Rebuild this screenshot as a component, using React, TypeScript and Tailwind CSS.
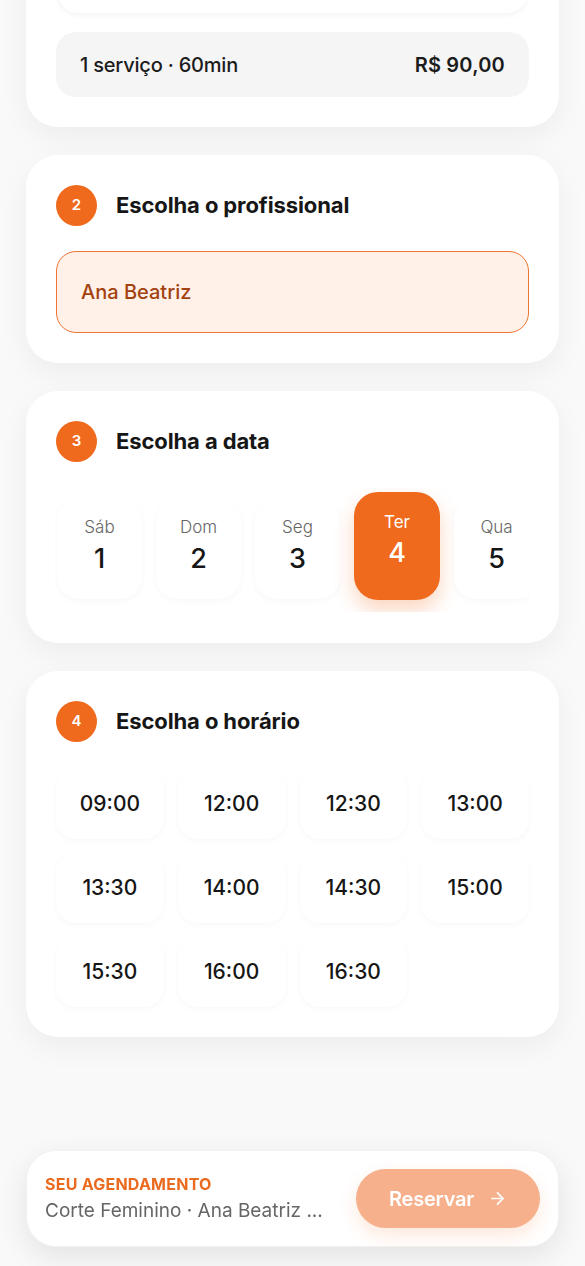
import { ArrowRight } from "lucide-react";

const days = [
  { name: "Sáb", num: 1 },
  { name: "Dom", num: 2 },
  { name: "Seg", num: 3 },
  { name: "Ter", num: 4 },
  { name: "Qua", num: 5 },
];

const times = [
  "09:00", "12:00", "12:30", "13:00",
  "13:30", "14:00", "14:30", "15:00",
  "15:30", "16:00", "16:30",
];

function StepHeader({ n, title }: { n: number; title: string }) {
  return (
    <div className="flex items-center gap-[19px] h-[41px]">
      <span className="w-[41px] h-[41px] rounded-full bg-[#f06a1d] text-white text-[15px] font-semibold flex items-center justify-center">
        {n}
      </span>
      <h2 className="text-[22px] font-bold tracking-[-0.005em] text-[#161616]">{title}</h2>
    </div>
  );
}

export default function App() {
  const selectedDay = 4;

  return (
    <div
      className="min-h-screen bg-[#f9f9f9] px-[26px] pb-[140px] overflow-hidden"
      style={{ fontFamily: "Inter, 'Noto Sans', sans-serif" }}
    >
      <div className="flex flex-col gap-7">
        {/* 1 - serviço (scrolled, top hidden) */}
        <section className="-mt-[87px] bg-white rounded-[32px] p-[30px] shadow-[0_10px_30px_rgba(0,0,0,0.05)]">
          <div className="h-[70px] rounded-[20px] bg-white shadow-[0_2px_6px_rgba(0,0,0,0.05)] mx-[2px]" />
          <div className="mt-[19px] h-[65px] rounded-[20px] bg-[#f5f5f5] px-6 flex items-center justify-between text-[20px] text-[#1c1c1c]">
            <span className="font-medium tracking-[-0.01em]">1 serviço · 60min</span>
            <span className="font-semibold tracking-[0.01em]">R$ 90,00</span>
          </div>
        </section>

        {/* 2 - profissional */}
        <section className="bg-white rounded-[32px] p-[30px] shadow-[0_10px_30px_rgba(0,0,0,0.05)]">
          <StepHeader n={2} title="Escolha o profissional" />
          <button className="mt-[25px] w-full h-[82px] rounded-[20px] border-[1.5px] border-[#ee7330] bg-[#fff0e8] px-[24px] text-left text-[20px] font-medium text-[#a3420f]">
            Ana Beatriz
          </button>
        </section>

        {/* 3 - data */}
        <section className="bg-white rounded-[32px] p-[30px] pb-[31px] shadow-[0_10px_30px_rgba(0,0,0,0.05)]">
          <StepHeader n={3} title="Escolha a data" />
          <div className="mt-[26px] -mx-[1px] px-[2px] pt-[11px] pb-[12px] flex items-start gap-[14px] overflow-hidden">
            {days.map((d) =>
              d.num === selectedDay ? (
                <div
                  key={d.num}
                  className="shrink-0 -mt-[7px] w-[86px] h-[108px] rounded-[24px] bg-[#f06a1d] text-white flex flex-col items-center pt-[18px] shadow-[0_10px_20px_rgba(240,106,29,0.28)]"
                >
                  <span className="text-[17px] leading-[24px]">{d.name}</span>
                  <span className="mt-[3px] text-[27px] leading-[32px] font-medium">{d.num}</span>
                </div>
              ) : (
                <div
                  key={d.num}
                  className="shrink-0 w-[85px] h-[100px] rounded-[22px] bg-white flex flex-col items-center pt-[16px] shadow-[0_2px_6px_rgba(0,0,0,0.035)]"
                >
                  <span className="text-[17px] leading-[24px] font-light text-[#666]">{d.name}</span>
                  <span className="mt-[4px] text-[27px] leading-[32px] font-medium text-[#161616]">{d.num}</span>
                </div>
              )
            )}
          </div>
        </section>

        {/* 4 - horário */}
        <section className="bg-white rounded-[32px] p-[30px] shadow-[0_10px_30px_rgba(0,0,0,0.05)]">
          <StepHeader n={4} title="Escolha o horário" />
          <div className="mt-[27px] grid grid-cols-4 gap-[14px]">
            {times.map((t) => (
              <button
                key={t}
                className="h-[70px] rounded-[20px] bg-white text-[21px] font-medium text-[#161616] shadow-[0_2px_6px_rgba(0,0,0,0.03)]"
              >
                {t}
              </button>
            ))}
          </div>
        </section>
      </div>

      {/* barra fixa */}
      <div className="fixed left-[26px] right-[26px] bottom-[19px] h-[97px] bg-white rounded-[30px] px-[18px] flex items-center gap-[17px] shadow-[0_10px_30px_rgba(0,0,0,0.09)] border border-[#f1f1f1]">
        <div className="flex-1 min-w-0">
          <p className="text-[16px] font-bold text-[#ea6a20] tracking-[0.015em] leading-[20px]">SEU AGENDAMENTO</p>
          <p className="mt-[4px] text-[19px] text-[#666] leading-[26px] whitespace-nowrap">
            Corte Feminino · Ana Beatriz ...
          </p>
        </div>
        <button className="shrink-0 w-[184px] h-[59px] rounded-full bg-[#f6b08b] text-white text-[20px] font-semibold tracking-[-0.01em] flex items-center justify-center gap-[14px] shadow-[0_8px_18px_rgba(240,106,29,0.15)]">
          <span>Reservar</span>
          <ArrowRight size={19} strokeWidth={2.2} />
        </button>
      </div>
    </div>
  );
}
